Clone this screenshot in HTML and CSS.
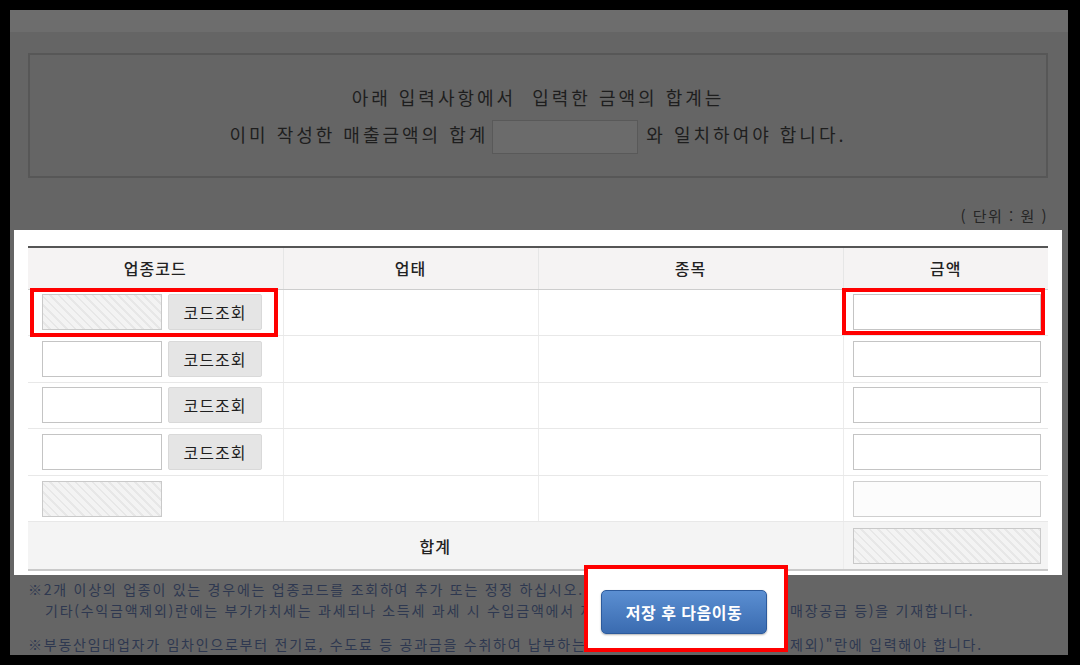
FILE: index.html
```html
<!DOCTYPE html>
<html lang="ko">
<head>
<meta charset="utf-8">
<title>업종별 수입금액</title>
<link rel="stylesheet" href="styles.css">
</head>
<body>
<div class="screen">
  <div class="topbar"></div>
  <div class="info">
    <p class="info-line">아래 입력사항에서&nbsp; 입력한 금액의 합계는</p>
    <p class="info-line">이미 작성한 매출금액의 합계<span class="info-input"></span> 와 일치하여야 합니다.</p>
  </div>
  <div class="unit">( 단위 : 원 )</div>
  <div class="panel">
    <table class="grid">
      <colgroup>
        <col class="c1"><col class="c2"><col class="c3"><col class="c4">
      </colgroup>
      <thead>
        <tr><th>업종코드</th><th>업태</th><th>종목</th><th>금액</th></tr>
      </thead>
      <tbody>
        <tr>
          <td class="code-cell"><div class="code"><span class="field hatched code-field"></span><span class="btn-code">코드조회</span></div><span class="mark mark-code"></span></td>
          <td></td><td></td>
          <td class="amt-cell"><span class="field amt-field"></span><span class="mark mark-amt"></span></td>
        </tr>
        <tr>
          <td class="code-cell"><div class="code"><span class="field code-field"></span><span class="btn-code">코드조회</span></div></td>
          <td></td><td></td>
          <td class="amt-cell"><span class="field amt-field"></span></td>
        </tr>
        <tr>
          <td class="code-cell"><div class="code"><span class="field code-field"></span><span class="btn-code">코드조회</span></div></td>
          <td></td><td></td>
          <td class="amt-cell"><span class="field amt-field"></span></td>
        </tr>
        <tr>
          <td class="code-cell"><div class="code"><span class="field code-field"></span><span class="btn-code">코드조회</span></div></td>
          <td></td><td></td>
          <td class="amt-cell"><span class="field amt-field"></span></td>
        </tr>
        <tr>
          <td class="code-cell"><div class="code"><span class="field hatched code-field"></span></div></td>
          <td></td><td></td>
          <td class="amt-cell"><span class="field amt-field soft"></span></td>
        </tr>
        <tr class="total">
          <td colspan="3">합계</td>
          <td class="amt-cell"><span class="field hatched amt-field"></span></td>
        </tr>
      </tbody>
    </table>
  </div>
  <div class="notes">
    <p class="note">※2개 이상의 업종이 있는 경우에는 업종코드를 조회하여 추가 또는 정정 하십시오.</p>
    <p class="note sub"><span class="seg seg-a2">기타(수익금액제외)란에는 부가가치세는 과세되나 소득세 과세 시 수입금액에서 제</span><span class="seg">매장공급 등)을 기재합니다.</span></p>
    <p class="note gap"><span class="seg seg-a3">※부동산임대업자가 임차인으로부터 전기료, 수도료 등 공과금을 수취하여 납부하는</span><span class="seg">제외)"란에 입력해야 합니다.</span></p>
  </div>
  <div class="save-box"><button class="btn-save" type="button">저장 후 다음이동</button></div>
</div>
</body>
</html>
```

FILE: styles.css
```css
* { box-sizing: border-box; }

html, body {
  margin: 0;
  padding: 0;
  background: #000;
}

body {
  width: 1080px;
  height: 665px;
  overflow: hidden;
  padding: 10px 12px 10px 10px;
  font-family: "Noto Sans CJK KR", "Noto Sans", sans-serif;
}

.screen {
  position: relative;
  width: 1058px;
  height: 645px;
  background: #656565;
  overflow: hidden;
}

.topbar {
  height: 22px;
  background: #6d6d6d;
}

.info {
  margin: 21px 20px 0 18px;
  height: 125px;
  border: 2px solid #575757;
  padding-top: 24px;
  text-align: center;
  color: #1e1e1e;
  font-size: 18px;
  letter-spacing: 3px;
}

.info-line {
  margin: 0;
  line-height: 37px;
  white-space: nowrap;
}

.info-input {
  display: inline-block;
  width: 146px;
  height: 34px;
  margin-left: 4px;
  vertical-align: middle;
  background: #6b6b6b;
  border: 1px solid #595959;
}

.unit {
  margin-top: 28px;
  padding-right: 20px;
  text-align: right;
  font-size: 15px;
  line-height: 20px;
  letter-spacing: 1.5px;
  color: #262626;
}

.panel {
  margin: 4px 6px 0 4px;
  background: #fff;
  padding: 16px 14px 4px;
}

.grid {
  width: 1020px;
  border-collapse: collapse;
  table-layout: fixed;
  border-top: 2px solid #555;
  border-bottom: 2px solid #c9c9c9;
  font-size: 16px;
  letter-spacing: 1px;
  color: #222;
}

.c1 { width: 255px; }
.c2 { width: 255px; }
.c3 { width: 305px; }
.c4 { width: 205px; }

.grid th {
  height: 42px;
  background: #f5f3f3;
  font-weight: 500;
  border-bottom: 1px solid #cdcdcd;
  border-left: 1px solid #e6e6e6;
  padding: 0;
}

.grid td {
  height: 46.6px;
  padding: 0;
  border-bottom: 1px solid #e8e8e8;
  border-left: 1px solid #ececec;
  vertical-align: middle;
}

.grid th:first-child,
.grid td:first-child { border-left: none; }

.code-cell { position: relative; padding-left: 14px !important; }

.code {
  display: flex;
  gap: 6px;
  align-items: center;
}

.field {
  display: block;
  height: 36px;
  background: #fff;
  border: 1px solid #c4c4c4;
}

.code-field { width: 120px; }

.hatched {
  background: repeating-linear-gradient(45deg, #f3f3f3 0 4px, #e7e7e7 4px 6px);
  border-color: #c9c9c9;
}

.soft { border-color: #cfcfcf; background: #fcfcfc; }

.btn-code {
  width: 94px;
  height: 36px;
  display: flex;
  align-items: center;
  justify-content: center;
  background: #e5e5e5;
  border: 1px solid #d9d9d9;
  border-radius: 2px;
  color: #1f1f1f;
  font-size: 16px;
  letter-spacing: 1px;
}

.amt-cell { position: relative; padding-left: 9px !important; }

.amt-field { width: 188px; }

.mark {
  position: absolute;
  border: 4px solid #f00;
  pointer-events: none;
}

.mark-code { left: 2px; right: 5px; top: -2px; bottom: -2px; }
.mark-amt { left: -2px; right: 3px; top: -2px; bottom: 0; }

.total td {
  height: 48px;
  background: #f4f4f4;
  text-align: center;
  font-weight: 500;
  border-bottom: none;
}

.total td.amt-cell { text-align: left; }

.notes {
  padding: 4px 0 0 18px;
  color: #2e3850;
  font-size: 14px;
  letter-spacing: 1.75px;
}

.note {
  margin: 0;
  line-height: 21px;
  white-space: nowrap;
  display: flex;
}

.seg { display: block; }
.seg-a2 { width: 745px; overflow: hidden; }
.seg-a3 { width: 762px; overflow: hidden; }

.note.sub { padding-left: 17px; }
.note.gap { margin-top: 13px; }

.save-box {
  position: absolute;
  left: 574px;
  top: 555px;
  width: 204px;
  height: 87px;
  border: 4px solid #f00;
  background: #fff;
  padding: 21px 0 0 13px;
}

.btn-save {
  width: 166px;
  height: 44px;
  border: 1px solid #2c5a9c;
  border-radius: 5px;
  background: linear-gradient(#5b8fd2, #3a6bb0);
  color: #fff;
  font-family: "Noto Sans CJK KR", "Noto Sans", sans-serif;
  font-size: 16px;
  font-weight: 700;
  letter-spacing: 0.5px;
  box-shadow: 0 1px 2px rgba(0,0,0,0.3);
}
```
